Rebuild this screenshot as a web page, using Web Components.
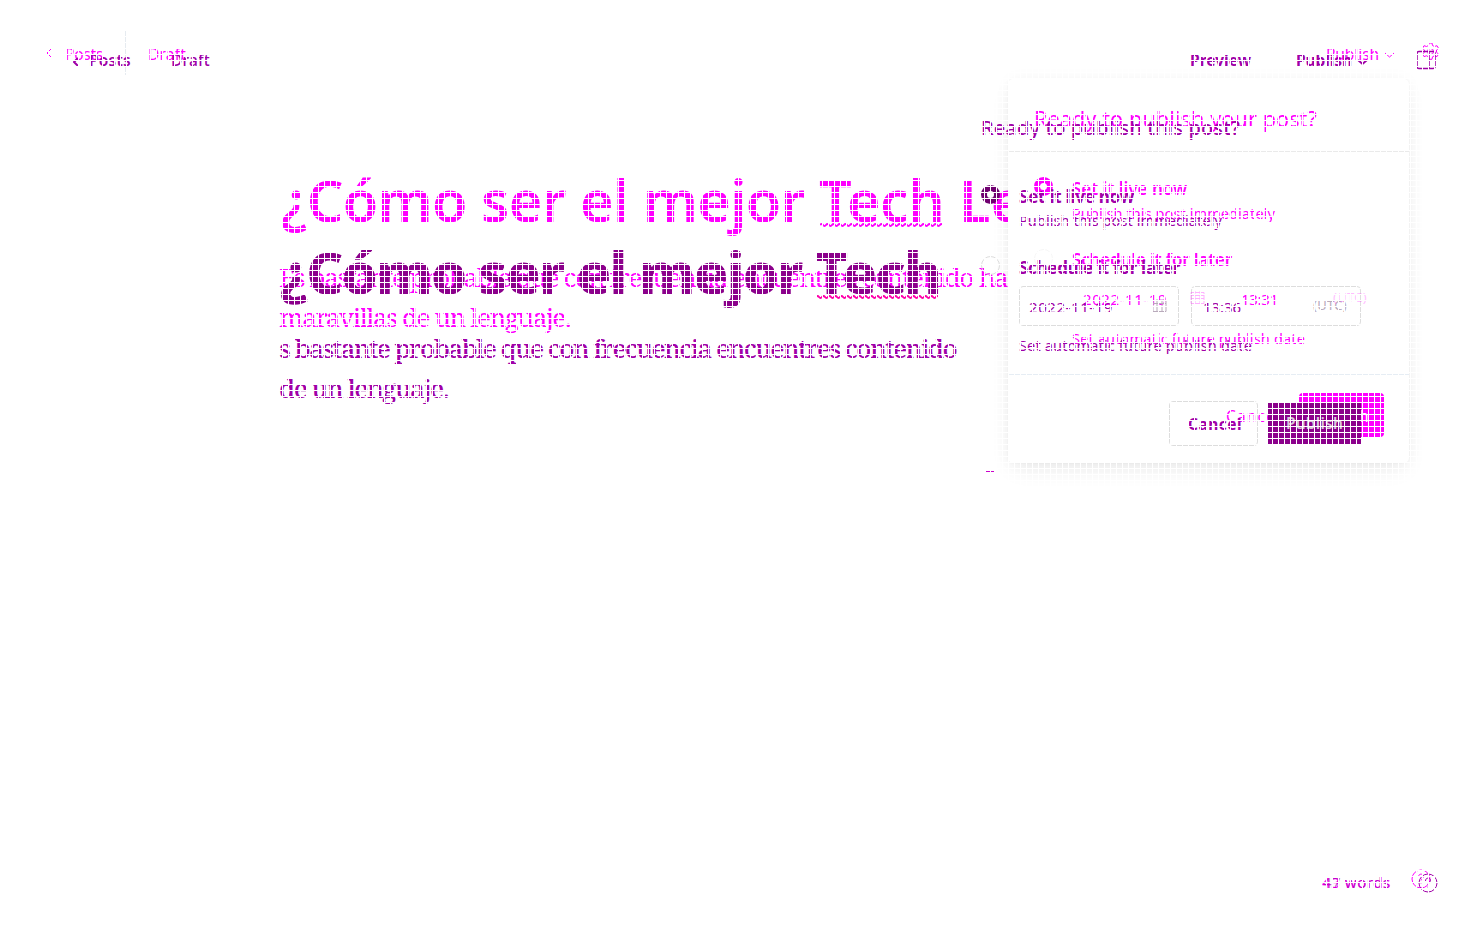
<!DOCTYPE html>
<html lang="en">
<head>
<meta charset="utf-8">
<title>Post editor</title>
<style>
html,body{margin:0;width:1483px;height:938px;overflow:hidden;background:#fff}
</style>
</head>
<body>
<diff-page></diff-page>
<script>
/* A run of text spread to a given width: w = width, s = size, b = weight, x / y = leading gaps */
class TextRun extends HTMLElement{
  connectedCallback(){
    const g=(n,d)=>this.getAttribute(n)??d, s=+g('s',15);
    const r=this.attachShadow({mode:'open'});
    r.innerHTML=`<style>:host{display:block;flex:none;white-space:pre;line-height:1;height:${s}px;font-size:${s}px;font-weight:${g('b',400)};margin:${g('y',0)}px 0 0 ${g('x',0)}px;width:${+g('w',50)+2}px}span{display:inline-block;margin-left:var(--nudge,0px)}</style><span><slot></slot></span>`;
    const sp=r.querySelector('span'),n=this.textContent.length;
    sp.style.letterSpacing=((+g('w',50)-sp.getBoundingClientRect().width)/n)+'px';
  }
}
customElements.define('text-run',TextRun);

/* Small line icons */
const ICONS={
  back:[8,10,'<path d="M6 1 2 5l4 4"/>'],
  down:[11,8,'<path d="m1 2 4.500 4L10 2"/>'],
  gear:[19,19,'<circle cx="9.500" cy="9.500" r="3"/><path d="m8 1 3 0 .5 2.500 2 1 2.500-.8 1.500 2.600-2 1.700v2.300l2 1.700-1.500 2.600-2.500-.8-2 1-.5 2.500H8l-.5-2.500-2-1-2.500.8L1.500 12l2-1.700V8l-2-1.700L3 3.700l2.500.8 2-1z"/>'],
  panel:[20,20,'<rect x="1" y="1.500" width="18" height="17" rx="2"/><path d="M13 1.500v17"/>'],
  help:[20,20,'<circle cx="10" cy="10" r="9"/><path d="M7.500 8c0-4 5-3.500 5-.5 0 2-2.500 2-2.500 4M10 13.500v1"/>'],
  cal:[15,15,'<path d="M1 2.500h13v11H1zM1 5.500h13M1 8.500h13M5 1v12M10 1v12"/>'],
  wave:[122,4,'<path d="M0 2q1.500-2 3 0t3 0 3 0 3 0 3 0 3 0 3 0 3 0 3 0 3 0 3 0 3 0 3 0 3 0 3 0 3 0 3 0 3 0 3 0 3 0 3 0 3 0 3 0 3 0 3 0 3 0 3 0 3 0 3 0 3 0 3 0 3 0 3 0 3 0 3 0 3 0 3 0 3 0 3 0 3 0 2 0"/>']
};
class LineIcon extends HTMLElement{
  connectedCallback(){
    const [w,h,p]=ICONS[this.getAttribute('name')],g=(n,d)=>this.getAttribute(n)??d;
    this.attachShadow({mode:'open'}).innerHTML=`<style>:host{display:block;flex:none;width:${w}px;height:${h}px;margin:${g('y',0)}px 0 0 ${g('x',0)}px}svg{display:block}</style><svg width="${w}" height="${h}" viewBox="0 0 ${w} ${h}" fill="none" stroke="currentColor" stroke-width="${g('k',1)}">${p}</svg>`;
  }
}
customElements.define('line-icon',LineIcon);

class RadioDot extends HTMLElement{
  connectedCallback(){
    this.attachShadow({mode:'open'}).innerHTML=`<style>:host{display:block;flex:none;box-sizing:border-box;width:19px;height:19px;border-radius:50%;border:1px solid #ddd}:host([on]){border:6px solid currentColor}</style>`;
  }
}
customElements.define('radio-dot',RadioDot);

const ROW=`.row{display:flex;align-items:flex-start;flex:none}.col{display:flex;flex-direction:column;align-items:flex-start;flex:none}`;

/* Editor in its newer state: light magenta */
customElements.define('editor-new',class extends HTMLElement{
  connectedCallback(){
    this.attachShadow({mode:'open'}).innerHTML=`<style>:host{display:flex;flex-direction:column;width:1483px;height:938px;color:#f0f;overflow:hidden}${ROW}
    header{height:78px}.line{width:1px;height:44px;margin:31px 0 0 20px;background:#e6ebf0}.main{height:780px;padding-left:280px}
    .body{font-family:"Noto Serif","Liberation Serif",serif;--nudge:-1px}</style>
    <header class="row"><line-icon name="back" x="45" y="48"></line-icon><text-run x="12" y="47" w="38" s="15.500">Posts</text-run><div class="line"></div><text-run x="22" y="47" w="38" s="15.500">Draft</text-run>
      <text-run x="1138" y="47" w="53" s="15.500">Publish</text-run><line-icon name="down" x="3" y="51"></line-icon><line-icon name="gear" x="26" y="42"></line-icon></header>
    <div class="main col">
      <div class="row"><text-run x="1" y="94" w="663" s="57.500" b="600">¿Cómo ser el mejor Tech</text-run><text-run x="13" y="94" w="66" s="57.500" b="600">Le</text-run></div>
      <line-icon name="wave" x="540" y="-7" k="2"></line-icon>
      <div class="row body"><text-run x="0" y="37" w="694" s="26">Es bastante probable que con frecuencia encuentres contenido</text-run><text-run x="4" y="37" w="28" s="26">ha</text-run></div>
      <text-run class="body" x="0" y="14" w="291" s="26">maravillas de un lenguaje.</text-run>
    </div>
    <footer class="row"><text-run x="1322" y="17" w="69" s="15">43 words</text-run><line-icon name="help" x="18" y="11"></line-icon></footer>`;
  }
});

/* Publish card in its newer state */
customElements.define('publish-card',class extends HTMLElement{
  connectedCallback(){
    this.attachShadow({mode:'open'}).innerHTML=`<style>:host{display:flex;flex-direction:column;box-sizing:border-box;width:401px;height:384px;margin:79px 0 0 1008px;border-radius:5px;background:#fff;color:#f0f;box-shadow:0 0 2px rgba(0,0,0,.05),0 9px 22px -5px rgba(0,0,0,.09),0 0 18px rgba(0,0,0,.03)}${ROW}
    .top{height:72px;border-bottom:1px solid #eaeaea}.mid{height:222px;border-bottom:1px solid #e6edf4}
    .btn{width:85px;height:44px;margin:18px 0 0 10px;border-radius:4px;background:#f0f;color:#fff}
    .pick{padding-left:26px}</style>
    <div class="top col"><text-run x="26" y="29" w="283" s="21.500">Ready to publish your post?</text-run></div>
    <div class="mid col">
      <div class="row pick" style="padding-top:25px"><radio-dot on></radio-dot><div class="col" style="margin-left:19px"><text-run y="3" w="115" s="17" b="600">Set it live now</text-run><text-run y="9" w="203" s="14.500">Publish this post immediately</text-run></div></div>
      <div class="row pick" style="padding-top:28px"><radio-dot style="opacity:.25"></radio-dot><div class="col" style="margin-left:19px"><text-run y="2" w="160" s="17" b="600">Schedule it for later</text-run>
        <div class="row"><text-run x="11" y="24" w="84" s="15">2022-11-19</text-run><line-icon name="cal" x="21" y="22" style="opacity:.3"></line-icon><text-run x="36" y="24" w="37" s="15">13:31</text-run><text-run x="53" y="23" w="34" s="13" style="opacity:.25">(UTC)</text-run></div>
        <text-run y="24" w="233" s="14.500">Set automatic future publish date</text-run></div></div>
    </div>
    <div class="row"><text-run x="218" y="34" w="55" s="15.500">Cancel</text-run><div class="btn row" style="margin-left:16px"><text-run x="13" y="16" w="57" s="15.500">Publish</text-run></div></div>`;
  }
});

/* Editor and publish form in the older state: dark magenta */
customElements.define('editor-old',class extends HTMLElement{
  connectedCallback(){
    this.attachShadow({mode:'open'}).innerHTML=`<style>:host{display:flex;flex-direction:column;width:1483px;height:938px;color:#a000a8;overflow:hidden}${ROW}
    header{height:78px}.main{height:780px}.left{width:980px;box-sizing:border-box;padding-left:280px}
    .title{color:#8b008b}.body{font-family:"Noto Serif","Liberation Serif",serif;--nudge:-1px}
    .box{box-sizing:border-box;height:40px;border:1px solid #ddd;border-radius:4px}
    .grey{color:#b9aabb}.btn{width:93px;height:42px;margin:27px 0 0 10px;background:#8b008b;color:#d9c8d9}
    .mark{width:8px;height:1px;margin:25px 0 0 6px;background:#c0c}</style>
    <header class="row"><line-icon name="back" x="72" y="57" k="2"></line-icon><text-run x="9" y="53" w="42" s="15.500" b="600">Posts</text-run><text-run x="38" y="53" w="39" s="15.500" b="500">Draft</text-run>
      <text-run x="978" y="53" w="61" s="15.500" b="700">Preview</text-run><text-run x="43" y="53" w="56" s="15.500" b="700">Publish</text-run><line-icon name="down" x="3" y="58" k="2"></line-icon><line-icon name="panel" x="48" y="50" k="1.500"></line-icon></header>
    <div class="row main">
      <div class="left col"><text-run class="title" x="0" y="166" w="660" s="57.500" b="800">¿Cómo ser el mejor Tech</text-run>
        <line-icon name="wave" x="536" y="-7" k="2" style="color:#f0a"></line-icon>
        <text-run class="body" y="36" w="677" s="26" b="500">s bastante probable que con frecuencia encuentres contenido</text-run>
        <text-run class="body" y="14" w="169" s="26" b="500">de un lenguaje.</text-run></div>
      <div class="col">
        <text-run x="1" y="40" w="259" s="20" b="500">Ready to publish this post?</text-run>
        <div class="row" style="margin:47px 0 0 1px"><radio-dot on style="color:#700070"></radio-dot><div class="col" style="margin-left:19px"><text-run y="3" w="115" s="17" b="700">Set it live now</text-run><text-run y="8" w="203" s="14.500">Publish this post immediately</text-run></div></div>
        <div class="row" style="margin:28px 0 0 1px"><radio-dot></radio-dot><div class="col" style="margin-left:19px"><text-run y="3" w="161" s="17" b="700">Schedule it for later</text-run>
          <div class="row" style="margin-top:10px"><div class="box row" style="width:160px"><text-run x="9" y="13" w="84" s="15">2022-11-19</text-run><line-icon class="grey" name="cal" x="37" y="11"></line-icon></div>
          <div class="box row" style="width:170px;margin-left:12px"><text-run x="11" y="13" w="38" s="15">13:36</text-run><text-run class="grey" x="70" y="12" w="34" s="13">(UTC)</text-run></div></div>
          <text-run y="12" w="233" s="14.500">Set automatic future publish date</text-run></div></div>
        <div class="row" style="margin-left:189px"><div class="box row" style="width:89px;height:45px;margin-top:49px"><text-run x="18" y="15" w="54" s="15.500" b="700">Cancel</text-run></div><div class="btn row" style="margin-top:50px"><text-run x="18" y="14" w="57" s="15.500" b="600">Publish</text-run></div></div>
        <div class="mark"></div>
      </div>
    </div>
    <footer class="row"><text-run x="1323" y="17" w="67" s="15" style="opacity:.6">47 words</text-run><line-icon name="help" x="26" y="15"></line-icon></footer>`;
  }
});

/* Stacks both states and rules a white 6px lattice over them */
customElements.define('diff-page',class extends HTMLElement{
  connectedCallback(){
    this.attachShadow({mode:'open'}).innerHTML=`<style>:host{display:grid;position:relative;width:1483px;height:938px;overflow:hidden;background:#fff;font-family:"Noto Sans","Open Sans",sans-serif}
    editor-new,publish-card,editor-old{grid-area:1/1}
    .lattice{position:absolute;inset:0;background:repeating-linear-gradient(90deg,#fff 0 1px,transparent 1px 6px),repeating-linear-gradient(#fff 0 1px,transparent 1px 6px)}</style>
    <editor-new></editor-new><publish-card></publish-card><editor-old></editor-old><div class="lattice"></div>`;
  }
});
</script>
</body>
</html>
